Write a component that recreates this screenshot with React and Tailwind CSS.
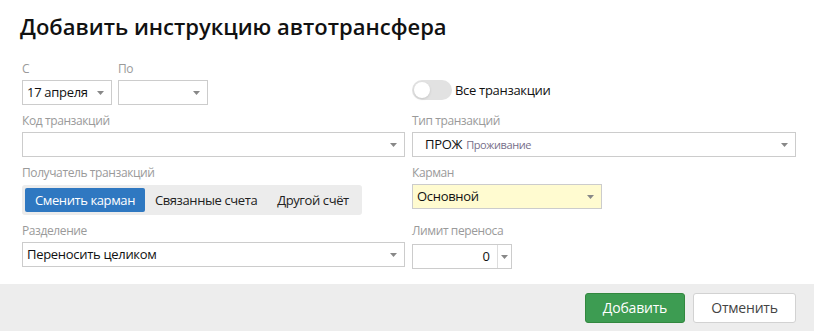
import { useState } from 'react'

function Caret() {
  return (
    <svg width="7" height="4" viewBox="0 0 7 4" className="shrink-0">
      <path d="M0 0h7L3.5 4z" fill="#888" />
    </svg>
  )
}

function Label({ children }) {
  return <div className="h-4 text-[12px] leading-4 tracking-[-0.4px] text-[#9a9a9a]">{children}</div>
}

function Select({ className = '', children, bg = 'bg-white' }) {
  return (
    <div className={`mt-[3px] flex h-[25px] items-center justify-between border border-[#cccccc] pl-1 pr-[7px] text-[13px] tracking-[-0.3px] text-[#111] ${bg} ${className}`}>
      <div className="flex min-w-0 items-baseline">{children}</div>
      <Caret />
    </div>
  )
}

export default function App() {
  const [active, setActive] = useState(0)
  const [all, setAll] = useState(false)
  const tabs = ['Сменить карман', 'Связанные счета', 'Другой счёт']

  return (
    <div className="w-[814px] h-[331px] bg-white font-['Open_Sans',sans-serif] flex flex-col">
      {/* Header */}
      <h1 className="pl-5 pt-[11px] text-[22px] font-semibold leading-[30px] text-[#111]">Добавить инструкцию автотрансфера</h1>

      {/* Form */}
      <div className="mt-5 grid grid-cols-[383px_384px] gap-x-[7px] gap-y-2 pl-[22px]">
        {/* row 1 */}
        <div className="flex gap-[6px]">
          <div className="w-[90px]">
            <Label>С</Label>
            <Select>17 апреля</Select>
          </div>
          <div className="w-[90px]">
            <Label>По</Label>
            <Select></Select>
          </div>
        </div>
        <div className="flex items-end pb-[5px]">
          <button
            onClick={() => setAll(!all)}
            className={`relative h-5 w-10 rounded-full ${all ? 'bg-[#3d9c52]' : 'bg-[#e2e2e2]'}`}
          >
            <span className={`absolute top-[2px] h-4 w-4 rounded-full bg-white shadow-sm ${all ? 'left-[22px]' : 'left-[2px]'}`} />
          </button>
          <span className="ml-[3px] text-[13px] leading-5 tracking-[-0.3px] text-[#111]">Все транзакции</span>
        </div>

        {/* row 2 */}
        <div>
          <Label>Код транзакций</Label>
          <Select></Select>
        </div>
        <div>
          <Label>Тип транзакций</Label>
          <Select>
            <span className="ml-2 text-[13px] text-[#111]">ПРОЖ</span>
            <span className="ml-1 text-[11px] text-[#77708a] tracking-[-0.4px]">Проживание</span>
          </Select>
        </div>

        {/* row 3 */}
        <div>
          <Label>Получатель транзакций</Label>
          <div className="mt-[4px] inline-flex rounded-[3px] bg-[#ececec] p-[3px]">
            {tabs.map((t, i) => (
              <button
                key={t}
                onClick={() => setActive(i)}
                className={`h-6 rounded-[2px] px-[10px] text-[13px] leading-6 tracking-[-0.4px] ${active === i ? 'bg-[#2f78c1] text-white' : 'text-[#222]'}`}
              >
                {t}
              </button>
            ))}
          </div>
        </div>
        <div>
          <Label>Карман</Label>
          <Select className="w-[190px]" bg="bg-[#fffbd0]">Основной</Select>
        </div>

        {/* row 4 */}
        <div>
          <Label>Разделение</Label>
          <Select>Переносить целиком</Select>
        </div>
        <div>
          <Label>Лимит переноса</Label>
          <div className="mt-[5px] flex h-[25px] w-[100px] items-center border border-[#cccccc] text-[13px] text-[#111]">
            <span className="flex-1 pr-[7px] text-right">0</span>
            <span className="flex h-full w-[14px] items-center justify-center border-l border-[#dddddd]">
              <Caret />
            </span>
          </div>
        </div>
      </div>

      {/* Footer */}
      <div className="mt-auto flex h-[47px] items-center justify-end gap-2 bg-[#ededed] pr-[18px]">
        <button className="h-[30px] w-[100px] rounded-[3px] border border-[#32883f] bg-[#3d9c52] text-[14px] tracking-[-0.2px] text-white">Добавить</button>
        <button className="h-[30px] w-[103px] rounded-[3px] border border-[#d2d2d2] bg-white text-[14px] tracking-[-0.2px] text-[#444]">Отменить</button>
      </div>
    </div>
  )
}
